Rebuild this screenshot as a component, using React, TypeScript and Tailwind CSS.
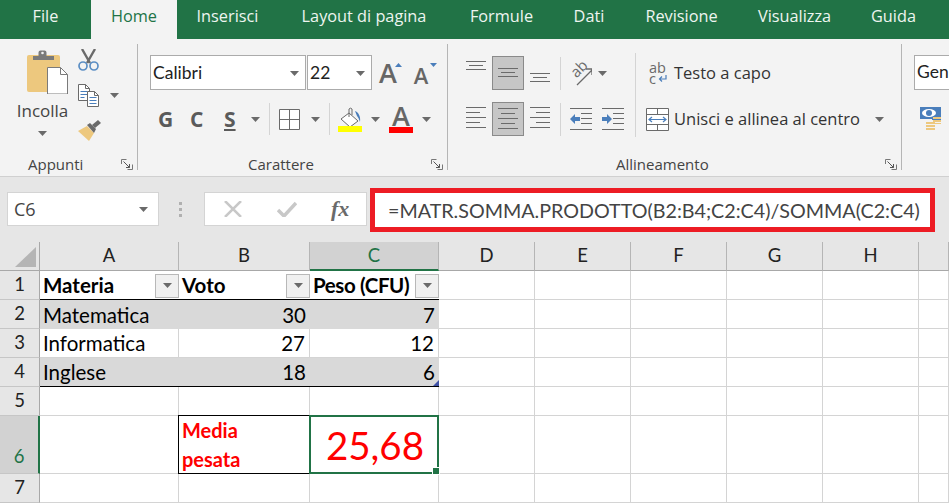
import React from "react";

const Caret = ({ className = "" }: { className?: string }) => (
  <svg width="9" height="5" viewBox="0 0 9 5" className={"shrink-0 " + className}>
    <path d="M0 0h9L4.5 5z" fill="#6a6a6a" />
  </svg>
);

const Sep = ({ className = "" }: { className?: string }) => <div className={"w-px shrink-0 bg-[#d4d4d4] " + className} />;

const Launcher = () => (
  <svg width="12" height="11" viewBox="0 0 12 11" className="shrink-0">
    <path d="M.5 5V.5h5M11.5 5.5v5h-5" fill="none" stroke="#777" />
    <path d="M2.5 2.5l6 6M5 8.500h3.500V5" fill="none" stroke="#555" />
  </svg>
);

const Lines = ({ lines, w = 20, h = 34 }: { lines: [number, number, number][]; w?: number; h?: number }) => (
  <svg width={w} height={h} viewBox={`0 0 ${w} ${h}`} className="shrink-0">
    {lines.map(([a, b, y], i) => (
      <path key={i} d={`M${a} ${y}H${b}`} stroke="#6a6a6a" strokeWidth="1" />
    ))}
  </svg>
);

const Selected = ({ children }: { children: React.ReactNode }) => (
  <div className="flex h-[34px] w-[32px] shrink-0 items-center justify-center border border-[#8a8a8a] bg-[#c6c6c6]">{children}</div>
);

const ClipboardIcon = () => (
  <svg width="41" height="44" viewBox="0 0 41 44" className="shrink-0">
    <rect x="0" y="5" width="33" height="37" rx="2" fill="#edc87e" />
    <path d="M6 10V6h5.500V2.500a2 2 0 0 1 2-2h4a2 2 0 0 1 2 2V6H27v4z" fill="#7a7a7a" />
    <circle cx="15.500" cy="3" r="1.300" fill="#f3f3f3" />
    <path d="M20.500 17.500h13l7 7v19.500h-20z" fill="#fff" stroke="#7a7a7a" />
    <path d="M33.500 17.500v7h7" fill="none" stroke="#7a7a7a" />
  </svg>
);

const ScissorsIcon = () => (
  <svg width="21" height="22" viewBox="0 0 21 22" className="shrink-0">
    <path d="M4 0l8 14M17 0L9 14" stroke="#6a6a6a" strokeWidth="2.400" fill="none" />
    <circle cx="5" cy="17" r="4" fill="none" stroke="#5b8ec4" strokeWidth="1.700" />
    <circle cx="16" cy="17" r="4" fill="none" stroke="#5b8ec4" strokeWidth="1.700" />
  </svg>
);

const CopyIcon = () => (
  <svg width="21" height="23" viewBox="0 0 21 23" className="shrink-0">
    <path d="M.5.500h7l4 4v12H.5z" fill="#fff" stroke="#6a6a6a" />
    <path d="M7.500.500v4h4" fill="none" stroke="#6a6a6a" />
    <path d="M2.500 7.500h7M2.500 10.500h7M2.500 13.500h4" stroke="#4a7ebb" />
    <path d="M9.500 7.500h7l4 4v11h-11z" fill="#fff" stroke="#6a6a6a" />
    <path d="M16.500 7.500v4h4" fill="none" stroke="#6a6a6a" />
    <path d="M11.500 13.500h7M11.500 16.500h7M11.500 19.500h7" stroke="#4a7ebb" />
  </svg>
);

const BrushIcon = () => (
  <svg width="24" height="21" viewBox="0 0 24 21" className="shrink-0">
    <path d="M0 11l9-5 7 7-5 8z" fill="#edc87e" />
    <path d="M9 5l3-2 6 6-2 4z" fill="#6a6a6a" />
    <path d="M14 5l6-5 3 3-6 5z" fill="#6a6a6a" />
  </svg>
);

const BorderIcon = () => (
  <svg width="21" height="21" viewBox="0 0 21 21" className="shrink-0">
    <path d="M.5.500h20v20H.5zM10.500.500v20M.5 10.500h20" fill="#fff" stroke="#6a6a6a" />
  </svg>
);

const BucketIcon = () => (
  <svg width="24" height="25" viewBox="0 0 24 25" className="shrink-0">
    <path d="M11 6l9 8-8 6-9-8z" fill="#fff" stroke="#6a6a6a" />
    <path d="M11 10V2a2 2 0 0 1 3 0v6" fill="none" stroke="#6a6a6a" />
    <path d="M17 4c3 1 6 5 5 11-1-3-2-5-3-6z" fill="#4a7ebb" />
    <rect x="0" y="19" width="24" height="6" fill="#ffff00" />
  </svg>
);

const OrientIcon = () => (
  <div className="relative h-[26px] w-[21px] shrink-0">
    <span className="absolute left-[-1px] top-[1px] block -rotate-45 text-[15px] leading-[15px] text-[#6a6a6a]">ab</span>
    <svg width="21" height="26" viewBox="0 0 21 26" className="absolute left-0 top-0">
      <path d="M6 25L21 10M15 9h6v6" fill="none" stroke="#6a6a6a" strokeWidth="1.300" />
    </svg>
  </div>
);

const IndentIcon = ({ dir }: { dir: "l" | "r" }) => (
  <svg width="22" height="22" viewBox="0 0 22 22" className="shrink-0">
    <path d="M0 .5h22M0 21.500h22" stroke="#6a6a6a" />
    {[5.5, 10.5, 15.5].map((y) => (
      <path key={y} d={`M11 ${y}h11`} stroke="#6a6a6a" />
    ))}
    {dir === "l" ? <path d="M0 11l5-5v3h5v4H5v3z" fill="#4a7ebb" /> : <path d="M10 11L5 6v3H0v4h5v3z" fill="#4a7ebb" />}
  </svg>
);

const MergeIcon = () => (
  <svg width="23" height="23" viewBox="0 0 23 23" className="shrink-0">
    <path d="M.5.500h22v22H.5zM.5 6.500h22M.5 16.500h22M11.500.500v6M11.500 16.500v6" fill="#fff" stroke="#6a6a6a" />
    <path d="M3 11.500h17M6 9l-3 2.500L6 14M17 9l3 2.500L17 14" fill="none" stroke="#4a7ebb" strokeWidth="1.200" />
  </svg>
);

const CurrencyIcon = () => (
  <svg width="24" height="23" viewBox="0 0 24 23" className="shrink-0">
    <path d="M0 0h23v13h-9v-1H2V0z" fill="#4a7ebb" />
    <ellipse cx="11" cy="6" rx="7" ry="4" fill="#fff" />
    <circle cx="11" cy="6" r="3" fill="#4a7ebb" />
    <path d="M15 10h8v2h-8zM15 13h8v2h-8zM15 16h8v1h-8z" fill="#edc87e" />
    <path d="M8 15h9v2H8zM8 18h9v2H8zM8 21h9v2H8z" fill="#edc87e" />
  </svg>
);

const Group = ({ w, label, labelClass, children }: { w: string; label: string; labelClass: string; children: React.ReactNode }) => (
  <div className={`flex h-[126px] shrink-0 flex-col border-r border-[#b5b5b5] ${w}`}>
    <div className="h-[110px] shrink-0">{children}</div>
    <div className="flex h-[16px] items-start text-[15px] leading-[20px] text-[#444]">
      <span className={labelClass}>{label}</span>
      <span className="ml-auto mr-[4px] mt-[5px] flex">
        <Launcher />
      </span>
    </div>
  </div>
);

const tabs: [string, string][] = [
  ["File", "w-[91px]"],
  ["Home", "w-[86px]"],
  ["Inserisci", "w-[101px]"],
  ["Layout di pagina", "w-[172px]"],
  ["Formule", "w-[103px]"],
  ["Dati", "w-[72px]"],
  ["Revisione", "w-[113px]"],
  ["Visualizza", "w-[113px]"],
  ["Guida", "w-[85px]"],
];

const columns = ["A", "B", "C", "D", "E", "F", "G", "H", ""];
const rowNums = [1, 2, 3, 4, 5, 6, 7];

const FilterBtn = () => (
  <div className="flex h-[24px] w-[24px] shrink-0 items-center justify-center border border-[#b8b8b8] bg-[#f0f0f0]">
    <Caret />
  </div>
);

const cellFont = "font-['Lato',sans-serif] text-[20.500px] text-black";

function cellFor(col: number, row: number) {
  const grid = "border-r border-b border-[#d4d4d4]";
  if (row === 1) {
    const base = `flex items-center border-b border-black pl-[3px] pt-[1px] font-bold ${cellFont}`;
    if (col === 0) return <div className={base}><span className="flex-1">Materia</span><FilterBtn /></div>;
    if (col === 1) return <div className={base}><span className="flex-1">Voto</span><FilterBtn /></div>;
    if (col === 2) return <div className={base + " tracking-[-0.4px]"}><span className="flex-1 whitespace-nowrap">Peso (CFU)</span><FilterBtn /></div>;
  }
  if (row >= 2 && row <= 4 && col <= 2) {
    const data = [
      ["Matematica", "30", "7"],
      ["Informatica", "27", "12"],
      ["Inglese", "18", "6"],
    ][row - 2];
    const bg = row === 3 ? "bg-white border-r border-b border-[#d4d4d4]" : "bg-[#d9d9d9]";
    const bottom = row === 4 ? "border-b border-black" : "";
    return (
      <div className={`relative flex items-center pt-[1px] ${bg} ${bottom} ${col === 0 ? "justify-start pl-[3px]" : "justify-end pr-[4px]"} ${cellFont}`}>
        {data[col]}
        {row === 4 && col === 2 && <div className="absolute bottom-0 right-0 h-0 w-0 border-b-[6px] border-l-[6px] border-b-[#3f51a5] border-l-transparent" />}
      </div>
    );
  }
  if (row === 6 && col === 1) {
    return (
      <div className="-ml-px -mt-px flex items-center border border-black pl-[3px] font-['Lato',sans-serif] text-[20px] font-bold leading-[29px] text-[#ff0000]">
        <span>
          Media
          <br />
          pesata
        </span>
      </div>
    );
  }
  if (row === 6 && col === 2) {
    return (
      <div className="relative -ml-px -mt-px flex items-center justify-end border-2 border-[#217346] pr-[13px] pt-[2px] font-['Lato',sans-serif] text-[38.500px] leading-none text-[#ff0000]">
        25,68
        <div className="absolute -bottom-[3px] -right-[3px] box-content h-[6px] w-[6px] border border-white bg-[#217346]" />
      </div>
    );
  }
  return <div className={grid} />;
}

export default function App() {
  return (
    <div className="h-[503px] w-[949px] overflow-hidden bg-white font-['Open_Sans',sans-serif]">
      <div className="flex h-[39px] bg-[#217346]">
        {tabs.map(([t, w]) => (
          <div key={t} className={`${w} flex shrink-0 items-center justify-center pb-[7px] text-[16.300px] ${t === "Home" ? "bg-[#f3f3f3] text-[#217346]" : "text-[#eef5f0]"}`}>
            {t}
          </div>
        ))}
      </div>

      <div className="flex h-[138px] overflow-hidden border-b border-[#d0d0d0] bg-[#f3f3f3] pt-[5px] text-[#444]">
        <Group w="w-[138px]" label="Appunti" labelClass="ml-[28px]">
          <div className="flex">
            <div className="ml-[17px] flex w-[51px] flex-col items-center pt-[6px]">
              <div className="ml-[9px] flex">
                <ClipboardIcon />
              </div>
              <div className="mt-[6px] whitespace-nowrap text-[17px] leading-[22px]">Incolla</div>
              <Caret className="mt-[9px]" />
            </div>
            <div className="ml-[10px] flex flex-col pt-[5px]">
              <ScissorsIcon />
              <div className="mt-[13px] flex items-center">
                <CopyIcon />
                <Caret className="ml-[11px]" />
              </div>
              <div className="mt-[13px]">
                <BrushIcon />
              </div>
            </div>
          </div>
        </Group>

        <Group w="w-[310px]" label="Carattere" labelClass="ml-[110px]">
          <div className="flex flex-col pt-[11px]">
            <div className="ml-[12px] flex h-[35px] items-center">
              <div className="flex h-[35px] w-[156px] items-center border border-[#ababab] bg-white pl-[2px] pr-[6px] pt-[1px] font-['Lato',sans-serif] text-[17.500px] text-[#222]">
                <span className="flex-1">Calibri</span>
                <Caret />
              </div>
              <div className="ml-px flex h-[35px] w-[65px] items-center border border-[#ababab] bg-white pl-[2px] pr-[6px] pt-[1px] font-['Lato',sans-serif] text-[17.500px] text-[#222]">
                <span className="flex-1">22</span>
                <Caret />
              </div>
              <div className="relative ml-[5px] h-[28px] w-[22px] text-center text-[27px] font-semibold leading-[28px] text-[#666]">
                A
                <svg width="7" height="4" className="absolute right-[-3px] top-[4px]"><path d="M3.500 0L7 4H0z" fill="#4a7ebb" /></svg>
              </div>
              <div className="relative ml-[12px] mt-[2px] h-[26px] w-[20px] text-center text-[22px] font-semibold leading-[28px] text-[#666]">
                A
                <svg width="7" height="4" className="absolute right-[-6px] top-[2px]"><path d="M0 0h7L3.500 4z" fill="#4a7ebb" /></svg>
              </div>
            </div>
            <div className="mt-[13px] flex h-[32px] items-center">
              <span className="ml-[20px] w-[32px] text-[21px] font-bold leading-none text-[#5a5a5a]">G</span>
              <span className="w-[34px] text-[21px] font-bold leading-none text-[#5a5a5a]">C</span>
              <span className="w-[23px] text-[21px] font-bold leading-none text-[#5a5a5a] underline decoration-[1.500px] underline-offset-2">S</span>
              <Caret className="ml-[4px]" />
              <Sep className="ml-[9px] h-[32px]" />
              <span className="ml-[9px] flex">
                <BorderIcon />
              </span>
              <Caret className="ml-[11px]" />
              <Sep className="ml-[9px] h-[32px]" />
              <span className="ml-[8px] flex">
                <BucketIcon />
              </span>
              <Caret className="ml-[9px]" />
              <div className="ml-[9px] flex w-[24px] flex-col items-center">
                <span className="h-[21px] text-[27px] font-semibold leading-[20px] text-[#666]">A</span>
                <div className="h-[6px] w-[24px] bg-[#ff0000]" />
              </div>
              <Caret className="ml-[9px]" />
            </div>
          </div>
        </Group>

        <Group w="w-[454px]" label="Allineamento" labelClass="ml-[168px]">
          <div className="flex pt-[9px]">
            <div className="ml-[18px] flex w-[169px] shrink-0 flex-col pt-[3px]">
              <div className="flex h-[34px] items-center">
                <Lines lines={[[0, 20, 5.5], [3, 17, 9.5], [0, 20, 13.5]]} />
                <span className="ml-[6px] flex">
                  <Selected>
                    <Lines lines={[[0, 20, 10.5], [3, 17, 14.5], [0, 20, 18.5]]} h={30} />
                  </Selected>
                </span>
                <span className="ml-[6px] flex">
                  <Lines lines={[[0, 20, 17.5], [3, 17, 21.5], [0, 20, 25.5]]} />
                </span>
                <Sep className="ml-[10px] h-[33px]" />
                <span className="ml-[10px] flex">
                  <OrientIcon />
                </span>
                <Caret className="ml-[6px]" />
              </div>
              <div className="mt-[12px] flex h-[34px] items-center">
                <Lines lines={[[0, 20, 5.5], [0, 14, 10.5], [0, 20, 15.5], [0, 14, 20.5], [0, 20, 25.5]]} />
                <span className="ml-[6px] flex">
                  <Selected>
                    <Lines lines={[[0, 20, 4.5], [3, 17, 9.5], [0, 20, 14.5], [3, 17, 19.5], [0, 20, 24.5]]} h={30} />
                  </Selected>
                </span>
                <span className="ml-[6px] flex">
                  <Lines lines={[[0, 20, 5.5], [6, 20, 10.5], [0, 20, 15.5], [6, 20, 20.5], [0, 20, 25.5]]} />
                </span>
                <Sep className="ml-[10px] h-[33px]" />
                <span className="ml-[9px] flex">
                  <IndentIcon dir="l" />
                </span>
                <span className="ml-[10px] flex">
                  <IndentIcon dir="r" />
                </span>
              </div>
            </div>
            <Sep className="h-[84px]" />
            <div className="flex flex-col text-[16.500px] text-[#333]">
              <div className="flex h-[34px] items-center pl-[13px] pt-[7px]">
                <div className="flex w-[25px] flex-col gap-[1px] text-[#6a6a6a]">
                  <span className="h-[10px] text-[14.500px] leading-[10px]">ab</span>
                  <span className="flex h-[10px] items-center text-[14.500px] leading-[10px]">
                    c
                    <svg width="9" height="8" className="ml-[2px]"><path d="M8 0v4H2M4 1.500L1.500 4 4 6.500" fill="none" stroke="#4a7ebb" strokeWidth="1.200" /></svg>
                  </span>
                </div>
                <span className="whitespace-nowrap">Testo a capo</span>
              </div>
              <div className="mt-[15px] flex h-[34px] items-center pl-[10px] pt-[1px]">
                <MergeIcon />
                <span className="ml-[5px] whitespace-nowrap">Unisci e allinea al centro</span>
                <Caret className="ml-[15px]" />
              </div>
            </div>
          </div>
        </Group>

        <div className="flex flex-col pl-[12px] pt-[11px]">
          <div className="flex h-[35px] w-[40px] items-center border border-r-0 border-[#ababab] bg-white pl-[2px] font-['Lato',sans-serif] text-[17.500px] text-[#222]">Gen</div>
          <div className="ml-[4px] mt-[17px]">
            <CurrencyIcon />
          </div>
        </div>
      </div>

      <div className="flex h-[65px] items-start bg-[#e6e6e6] pt-[11px]">
        <div className="ml-[7px] mt-[4px] flex h-[34px] w-[152px] items-center border border-[#d4d4d4] bg-white pl-[6px] pr-[10px] pt-[1px] text-[18px] text-[#444]">
          <span className="flex-1">C6</span>
          <Caret />
        </div>
        <div className="ml-[20px] mt-[14px] flex flex-col gap-[3px]">
          <div className="h-[3px] w-[3px] bg-[#b0b0b0]" />
          <div className="h-[3px] w-[3px] bg-[#b0b0b0]" />
          <div className="h-[3px] w-[3px] bg-[#b0b0b0]" />
        </div>
        <div className="ml-[22px] mt-[4px] flex h-[34px] w-[163px] items-center border border-[#d4d4d4] bg-white">
          <svg width="18" height="16" viewBox="0 0 18 16" className="ml-[19px]"><path d="M1 0l16 16M17 0L1 16" stroke="#c8c8c8" strokeWidth="2.500" /></svg>
          <svg width="20" height="16" viewBox="0 0 20 16" className="ml-[35px]"><path d="M1 9l6 6L19 2" fill="none" stroke="#c8c8c8" strokeWidth="3.500" /></svg>
          <span className="ml-[34px] font-['Liberation_Serif',serif] text-[22px] font-bold italic leading-none text-[#6a6a6a]">fx</span>
        </div>
        <div className="ml-[3px] flex h-[44px] w-[565px] items-center whitespace-nowrap border-[5px] border-[#ed1c24] bg-white pl-[13px] pt-[1px] font-['Lato',sans-serif] text-[19.700px] text-[#444]">
          =MATR.SOMMA.PRODOTTO(B2:B4;C2:C4)/SOMMA(C2:C4)
        </div>
      </div>

      <div className="grid grid-cols-[40px_139px_131px_129px_96px_96px_96px_96px_96px_30px] grid-rows-[29px_29px_29px_29px_29px_29px_58px_29px] font-['Lato',sans-serif]">
        <div className="flex items-end justify-end border-b border-r border-[#a8a8a8] bg-[#e6e6e6] pb-[3px] pr-[3px]">
          <div className="h-0 w-0 border-b-[20px] border-l-[21px] border-b-[#b5b5b5] border-l-transparent" />
        </div>
        {columns.map((c, i) => (
          <div
            key={i}
            className={`flex items-center justify-center text-[18.500px] ${
              c === "C"
                ? "border-b-2 border-r border-b-[#217346] border-r-[#b5b5b5] bg-[#d2d2d2] text-[#217346]"
                : "border-b border-r border-b-[#a8a8a8] border-r-[#b5b5b5] bg-[#e6e6e6] text-[#222]"
            }`}
          >
            {c}
          </div>
        ))}
        {rowNums.map((r) => (
          <React.Fragment key={r}>
            <div
              className={`flex justify-center text-[18.500px] ${
                r === 6
                  ? "items-end border-b border-r-2 border-b-[#c6c6c6] border-r-[#217346] bg-[#d2d2d2] pb-[2px] text-[#217346]"
                  : "items-center border-b border-r border-b-[#c6c6c6] border-r-[#a8a8a8] bg-[#e6e6e6] text-[#222]"
              }`}
            >
              {r}
            </div>
            {columns.map((_, c) => (
              <React.Fragment key={c}>{cellFor(c, r)}</React.Fragment>
            ))}
          </React.Fragment>
        ))}
      </div>
    </div>
  );
}
